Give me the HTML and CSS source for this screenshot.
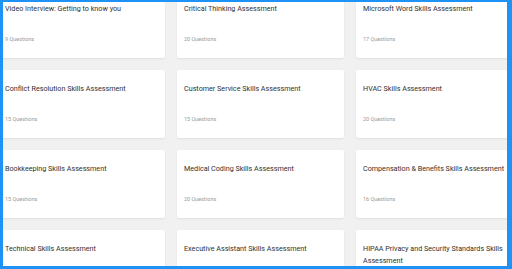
FILE: index.html
```html
<!DOCTYPE html>
<html lang="en">
<head>
    <meta charset="UTF-8">
    <meta name="viewport" content="width=device-width, initial-scale=1.0">
    <title>Assessments</title>
    <link rel="stylesheet" href="styles.css">
</head>
<body>

    <div class="frame">
        <div class="grid">
            <div class="card"><h3>Video Interview: Getting to know you</h3><p>9 Questions</p></div>
            <div class="card"><h3>Critical Thinking Assessment</h3><p>20 Questions</p></div>
            <div class="card"><h3>Microsoft Word Skills Assessment</h3><p>17 Questions</p></div>

            <div class="card"><h3>Conflict Resolution Skills Assessment</h3><p>15 Questions</p></div>
            <div class="card"><h3>Customer Service Skills Assessment</h3><p>15 Questions</p></div>
            <div class="card"><h3>HVAC Skills Assessment</h3><p>20 Questions</p></div>

            <div class="card"><h3>Bookkeeping Skills Assessment</h3><p>15 Questions</p></div>
            <div class="card"><h3>Medical Coding Skills Assessment</h3><p>20 Questions</p></div>
            <div class="card"><h3>Compensation &amp; Benefits Skills Assessment</h3><p>16 Questions</p></div>

            <div class="card"><h3>Technical Skills Assessment</h3></div>
            <div class="card"><h3>Executive Assistant Skills Assessment</h3></div>
            <div class="card"><h3>HIPAA Privacy and Security Standards Skills Assessment</h3></div>
        </div>
    </div>

</body>
</html>
```

FILE: styles.css
```css
html, body {
    margin: 0;
    padding: 0;
}
body {
    font-family: Roboto, "Noto Sans", Arial, sans-serif;
    background-color: #f1f1f1;
}
.frame {
    box-sizing: border-box;
    height: 100vh;
    overflow: hidden;
    border-style: solid;
    border-color: #1f93f5;
    border-width: 2px 5px 3px 3px;
    background-color: #f1f1f1;
}
.grid {
    display: grid;
    grid-template-columns: repeat(3, 167px);
    grid-auto-rows: 68px;
    gap: 12px;
    margin-top: -12px;
    margin-left: -5px;
}
.card {
    display: flex;
    flex-direction: column;
    box-sizing: border-box;
    padding: 13px 7px 15px 7px;
    background-color: #fff;
    border-radius: 2px;
    box-shadow: 0 1px 2px rgba(0, 0, 0, 0.08);
}
.card h3 {
    margin: 0;
    font-size: 7.2px;
    line-height: 12px;
    font-weight: 400;
    color: #303030;
}
.card p {
    margin: auto 0 0 0;
    font-size: 5.5px;
    line-height: 8px;
    color: #9a9a9a;
}
```
